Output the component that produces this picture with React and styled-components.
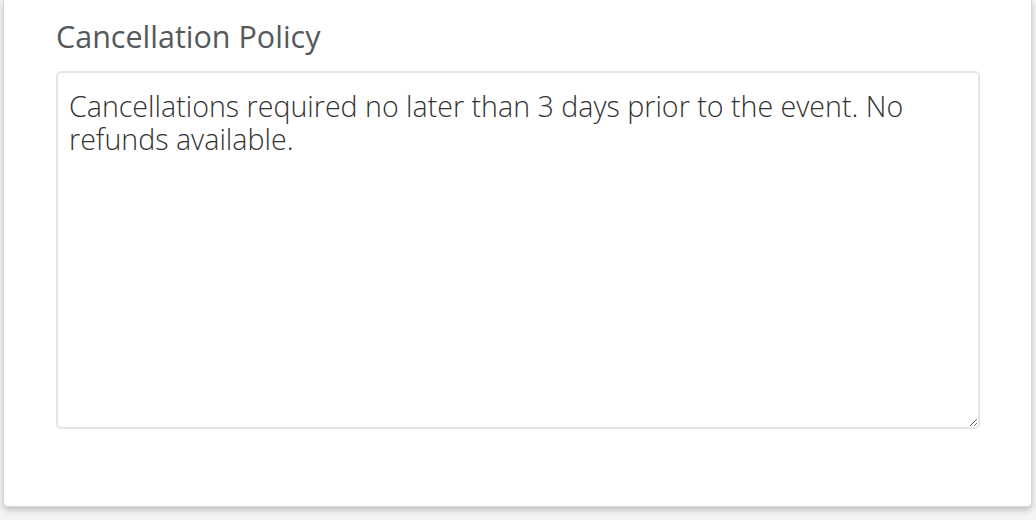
import React, { useEffect, useRef } from "react"
import styled, { createGlobalStyle } from "styled-components"

const GlobalStyle = createGlobalStyle`
  html, body {
    margin: 0;
    padding: 0;
    background: #f4f4f4;
    font-family: "Open Sans", "Liberation Sans", sans-serif;
  }
`

const Page = styled.div`
  width: 1036px;
  height: 520px;
  padding: 0 4px 0 3px;
  box-sizing: border-box;
  overflow: hidden;
`

const Card = styled.div`
  background: #fff;
  border: 1px solid #d6d6d6;
  border-top: none;
  border-radius: 0 0 5px 5px;
  box-shadow: 0 3px 6px rgba(0, 0, 0, 0.22);
  padding: 16px 51px 77px 52px;
`

const Label = styled.label`
  display: block;
  font-size: 30.5px;
  line-height: 40px;
  color: #55595c;
  font-weight: 400;
  margin-bottom: 15px;
`

const TextArea = styled.textarea`
  display: block;
  width: 100%;
  height: 358px;
  box-sizing: border-box;
  border: 2px solid #e6e6e6;
  border-radius: 5px;
  padding: 16px 11px;
  font-family: "Open Sans", "Liberation Sans", sans-serif;
  font-size: 28.6px;
  font-weight: 300;
  line-height: 33px;
  color: #333;
  caret-color: #111;
  resize: vertical;
  outline: none;
`

export default function App() {
  const area = useRef(null)

  useEffect(() => {
    const el = area.current
    el.focus()
    el.setSelectionRange(el.value.length, el.value.length)
  }, [])

  return (
    <Page>
      <GlobalStyle />
      <Card>
        <Label htmlFor="policy">Cancellation Policy</Label>
        <TextArea
          id="policy"
          ref={area}
          defaultValue="Cancellations required no later than 3 days prior to the event. No refunds available."
        />
      </Card>
    </Page>
  )
}
